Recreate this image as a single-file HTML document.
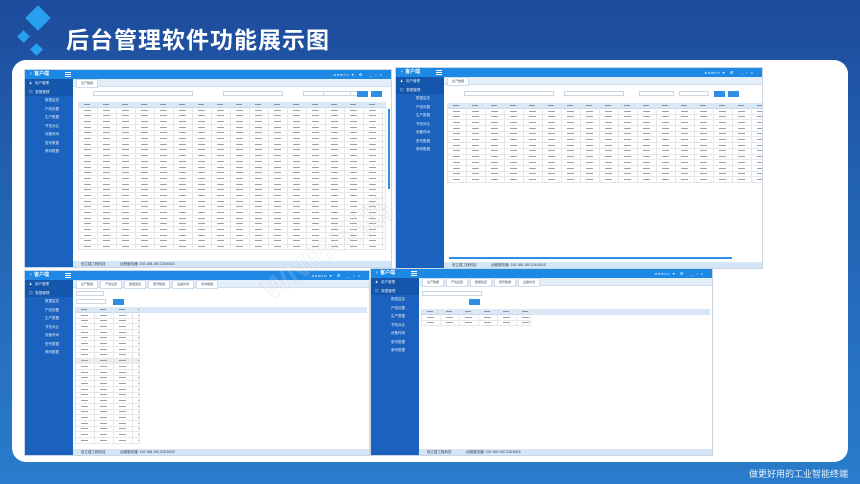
<!DOCTYPE html>
<html><head><meta charset="utf-8"><style>
*{margin:0;padding:0;box-sizing:border-box}
body{width:860px;height:484px;overflow:hidden;position:relative;font-family:"Liberation Sans","Noto Sans CJK SC",sans-serif;background:linear-gradient(180deg,#1e4b9b 0%,#2260b0 35%,#2a7ccc 100%)}
.title{position:absolute;left:66px;top:21px;color:#fff;font-size:23px;font-weight:bold;letter-spacing:1px}
.dm{position:absolute;background:#27a0f2;transform:rotate(45deg)}
.card{position:absolute;left:12px;top:60px;width:836px;height:402px;background:#fff;border-radius:14px}
.foot{position:absolute;right:12px;top:467px;color:#e8f0fa;font-size:9px}
.p{position:absolute;background:#fff;border:1px solid #c9d6e4;overflow:hidden}
.hd{position:absolute;left:0;right:0;top:0;height:9px;background:#1e88e5;color:#fff;font-size:4px;line-height:9px}
.hd .lg{position:absolute;left:4px;font-weight:bold;font-size:5px}
.hd .hb{position:absolute;left:40px;top:2px;width:6px;height:5px;border-top:1px solid #fff;border-bottom:1px solid #fff}
.hd .hb:after{content:"";position:absolute;left:0;right:0;top:1px;border-top:1px solid #fff}
.hd .rt{position:absolute;right:8px;letter-spacing:1px}
.sb{position:absolute;left:0;top:9px;bottom:0;width:48px;background:#1a62bd;color:#dce9f8;font-size:3.5px}
.sb div{height:8.5px;line-height:8.5px;padding-left:20px}
.sb .m{background:#1456ab;padding-left:4px}
.ct{position:absolute;left:48px;right:0;top:9px;bottom:0}
.tab{height:8px;background:#e4eef9;border-bottom:1px solid #cfdff0;font-size:3px;color:#456;line-height:7px;padding-left:3px}
.tab span{display:inline-block;padding:0 4px;background:#fff;margin-right:2px;border:1px solid #cde}
.st{position:absolute;left:0;right:0;bottom:0;height:6px;background:#d4e5f6;font-size:3.5px;line-height:6px;color:#345;padding-left:8px}
.tb{position:absolute;border-left:1px solid #e4e4e4;border-right:1px solid #e4e4e4}
.tb:after{content:"";position:absolute;inset:0;background:repeating-linear-gradient(90deg,transparent 0 18px,#e6e6e6 18px 19px)}
.tb i{display:block;height:5.7px;border-bottom:1px solid #e8e8e8;background:repeating-linear-gradient(90deg,transparent 0 5px,#9aa2ab 5px 12px,transparent 12px 19px) center/100% 1.4px no-repeat}
.tb .h{height:6px;border-bottom:1px solid #c8d8ea;background:#d8e8f7 repeating-linear-gradient(90deg,transparent 0 5px,#8894a0 5px 11px,transparent 11px 19px) center/100% 1.4px no-repeat}
.fl{position:absolute;height:5px;border:1px solid #ccd6e0;background:#fff}
.bt{position:absolute;height:6px;background:#2e8ee6}
.wm{position:absolute;left:250px;top:225px;font-size:30px;color:#fff;opacity:.15;transform:rotate(-35deg);-webkit-text-stroke:1px #9ab;font-weight:bold}
</style></head><body>
<div class="dm" style="left:29px;top:9px;width:18px;height:18px"></div>
<div class="dm" style="left:19px;top:32px;width:9px;height:9px"></div>
<div class="dm" style="left:32px;top:45px;width:9px;height:9px"></div>
<div class="title">后台管理软件功能展示图</div>
<div class="card"></div>

<!-- Panel A -->
<div class="p" style="left:24px;top:69px;width:368px;height:199px">
 <div class="hd"><span class="lg">♆ 客户端</span><span class="hb"></span><span class="rt">admin ▾ &nbsp;⚙ &nbsp; _ ▫ ×</span></div>
 <div class="sb"><div class="m">♟ &nbsp; 用户管理</div><div class="m">▤ &nbsp; 数据管理</div><div>数据监控</div><div>产线设置</div><div>生产数据</div><div>节拍对比</div><div>设备时间</div><div>型号数据</div><div>条码数据</div></div>
 <div class="ct">
  <div class="tab"><span>生产数据</span></div>
  <div class="fl" style="left:20px;top:12px;width:100px"></div><div class="fl" style="left:150px;top:12px;width:60px"></div><div class="fl" style="left:230px;top:12px;width:60px"></div><div class="fl" style="left:250px;top:12px;width:28px"></div>
  <div class="bt" style="left:284px;top:12px;width:11px"></div><div class="bt" style="left:298px;top:12px;width:11px"></div>
  <div class="tb" style="left:5px;top:23px;width:308px"><div class="h"></div><i></i><i></i><i></i><i></i><i></i><i></i><i></i><i></i><i></i><i></i><i></i><i></i><i></i><i></i><i></i><i></i><i></i><i></i><i></i><i></i><i></i><i></i><i></i><i></i><i></i></div>
  <div style="position:absolute;right:1px;top:30px;width:2px;height:80px;background:#2e8ee6"></div>
  <div class="st">信立建工程科技 &nbsp;&nbsp;&nbsp;&nbsp;&nbsp;&nbsp;&nbsp;&nbsp;&nbsp;&nbsp;&nbsp;&nbsp;&nbsp; 远程服务器: 192.168.150.226:5015</div>
 </div>
</div>

<!-- Panel B -->
<div class="p" style="left:395px;top:67px;width:368px;height:202px">
 <div class="hd"><span class="lg">♆ 客户端</span><span class="hb"></span><span class="rt">admin ▾ &nbsp;⚙ &nbsp; _ ▫ ×</span></div>
 <div class="sb"><div class="m">♟ &nbsp; 用户管理</div><div class="m">▤ &nbsp; 数据管理</div><div>数据监控</div><div>产线设置</div><div>生产数据</div><div>节拍对比</div><div>设备时间</div><div>型号数据</div><div>条码数据</div></div>
 <div class="ct">
  <div class="tab"><span>生产数据</span></div>
  <div class="fl" style="left:20px;top:14px;width:90px"></div><div class="fl" style="left:120px;top:14px;width:60px"></div><div class="fl" style="left:195px;top:14px;width:35px"></div><div class="fl" style="left:235px;top:14px;width:30px"></div>
  <div class="bt" style="left:270px;top:14px;width:11px"></div><div class="bt" style="left:284px;top:14px;width:11px"></div>
  <div class="tb" style="left:3px;top:26px;width:316px"><div class="h"></div><i></i><i></i><i></i><i></i><i></i><i></i><i></i><i></i><i></i><i></i><i></i><i></i><i></i></div>
  <div style="position:absolute;left:5px;right:30px;bottom:9px;height:2px;background:#2e8ee6"></div>
  <div class="st">信立建工程科技 &nbsp;&nbsp;&nbsp;&nbsp;&nbsp;&nbsp;&nbsp;&nbsp;&nbsp;&nbsp;&nbsp;&nbsp;&nbsp; 远程服务器: 192.168.150.226:5015</div>
 </div>
</div>

<!-- Panel C -->
<div class="p" style="left:24px;top:270px;width:346px;height:186px">
 <div class="hd"><span class="lg">♆ 客户端</span><span class="hb"></span><span class="rt">admin ▾ &nbsp;⚙ &nbsp; _ ▫ ×</span></div>
 <div class="sb"><div class="m">♟ &nbsp; 用户管理</div><div class="m">▤ &nbsp; 数据管理</div><div>数据监控</div><div>产线设置</div><div>生产数据</div><div>节拍对比</div><div>设备时间</div><div>型号数据</div><div>条码数据</div></div>
 <div class="ct">
  <div class="tab"><span>生产数据</span><span>产线设置</span><span>数据监控</span><span>型号数据</span><span>设备时间</span><span>条码数据</span></div>
  <div class="fl" style="left:3px;top:11px;width:28px"></div>
  <div class="fl" style="left:3px;top:19px;width:30px"></div><div class="bt" style="left:40px;top:19px;width:11px"></div>
  <div style="position:absolute;left:2px;right:2px;top:27px;height:6px;background:#d8e8f7"></div>
  <div class="tb" style="left:2px;top:27px;width:65px"><div class="h"></div><i></i><i></i><i></i><i></i><i></i><i></i><i></i><i></i><i style="background-color:#ececec"></i><i></i><i></i><i></i><i></i><i></i><i></i><i></i><i></i><i></i><i></i><i></i><i></i><i></i><i></i></div>
  <div class="bt" style="left:230px;top:169px;width:5px"></div><div class="bt" style="left:237px;top:169px;width:5px"></div><div class="fl" style="left:244px;top:169px;width:5px;height:6px"></div><div class="bt" style="left:251px;top:169px;width:5px"></div><div class="bt" style="left:258px;top:169px;width:5px"></div><div class="fl" style="left:266px;top:169px;width:28px;height:6px"></div>
  <div class="st">信立建工程科技 &nbsp;&nbsp;&nbsp;&nbsp;&nbsp;&nbsp;&nbsp;&nbsp;&nbsp;&nbsp;&nbsp;&nbsp;&nbsp; 远程服务器: 192.168.150.226:5015</div>
 </div>
</div>

<!-- Panel D -->
<div class="p" style="left:370px;top:268px;width:343px;height:188px">
 <div class="hd"><span class="lg">♆ 客户端</span><span class="hb"></span><span class="rt">admin ▾ &nbsp;⚙ &nbsp; _ ▫ ×</span></div>
 <div class="sb"><div class="m">♟ &nbsp; 用户管理</div><div class="m">▤ &nbsp; 数据管理</div><div>数据监控</div><div>产线设置</div><div>生产数据</div><div>节拍对比</div><div>设备时间</div><div>型号数据</div><div>条码数据</div></div>
 <div class="ct">
  <div class="tab"><span>生产数据</span><span>产线设置</span><span>数据监控</span><span>型号数据</span><span>设备时间</span></div>
  <div class="fl" style="left:3px;top:13px;width:60px"></div>
  <div class="bt" style="left:50px;top:21px;width:11px"></div>
  <div style="position:absolute;left:2px;right:2px;top:31px;height:6px;background:#d8e8f7"></div>
  <div class="tb" style="left:2px;top:31px;width:110px"><div class="h"></div><i></i><i></i></div>
  <div class="st">信立建工程科技 &nbsp;&nbsp;&nbsp;&nbsp;&nbsp;&nbsp;&nbsp;&nbsp;&nbsp;&nbsp;&nbsp;&nbsp;&nbsp; 远程服务器: 192.168.150.226:5015</div>
 </div>
</div>

<div class="wm">WNPN讯鹏</div>
<div class="foot">做更好用的工业智能终端</div>
</body></html>
